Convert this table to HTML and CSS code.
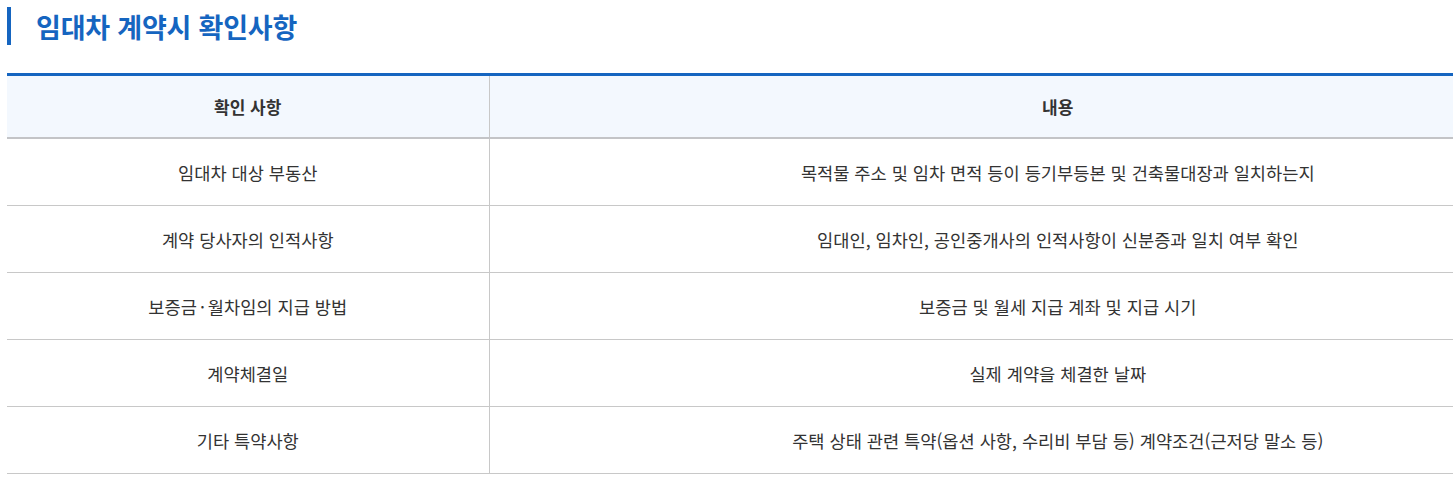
FILE: index.html
```html
<!DOCTYPE html>
<html lang="ko">
<head>
<meta charset="utf-8">
<link rel="stylesheet" href="styles.css">
</head>
<body>
<div class="page">
  <h2 class="title">임대차 계약시 확인사항</h2>
  <table class="check">
    <colgroup><col class="c1"><col class="c2"></colgroup>
    <thead>
      <tr><th>확인 사항</th><th>내용</th></tr>
    </thead>
    <tbody>
      <tr><td>임대차 대상 부동산</td><td>목적물 주소 및 임차 면적 등이 등기부등본 및 건축물대장과 일치하는지</td></tr>
      <tr><td>계약 당사자의 인적사항</td><td>임대인, 임차인, 공인중개사의 인적사항이 신분증과 일치 여부 확인</td></tr>
      <tr><td>보증금<span class="dot">·</span>월차임의 지급 방법</td><td>보증금 및 월세 지급 계좌 및 지급 시기</td></tr>
      <tr><td>계약체결일</td><td>실제 계약을 체결한 날짜</td></tr>
      <tr><td>기타 특약사항</td><td>주택 상태 관련 특약(옵션 사항, 수리비 부담 등) 계약조건(근저당 말소 등)</td></tr>
    </tbody>
  </table>
</div>
</body>
</html>
```
FILE: styles.css
```css
html, body {
  margin: 0;
  padding: 0;
  background: #fff;
}
body {
  font-family: "Noto Sans CJK KR", "Noto Sans", sans-serif;
  color: #333;
}
.page {
  padding: 7px 0 0 7px;
  width: 1619px;
}
.title {
  margin: 0;
  height: 38px;
  display: flex;
  align-items: center;
  border-left: 4px solid #1565c0;
  padding-left: 25px;
  font-size: 27px;
  font-weight: 700;
  color: #1565c0;
  letter-spacing: -0.2px;
  line-height: 1;
}
.check {
  margin-top: 28px;
  width: 1619px;
  border-collapse: collapse;
  border-top: 3px solid #1565c0;
  font-size: 17.6px;
}
.c1 { width: 482px; }
.check th {
  height: 61px;
  padding: 0;
  background: #f3f8fe;
  font-weight: 700;
  font-size: 17px;
  color: #333;
  border-bottom: 2px solid #c3c4c7;
  text-align: center;
}
.check td {
  height: 66px;
  padding: 0;
  text-align: center;
  border-bottom: 1px solid #c8c8c8;
  color: #333;
}
.dot {
  padding: 0 3px;
}
.check th:first-child,
.check td:first-child {
  border-right: 1px solid #c8c8c8;
}
```
